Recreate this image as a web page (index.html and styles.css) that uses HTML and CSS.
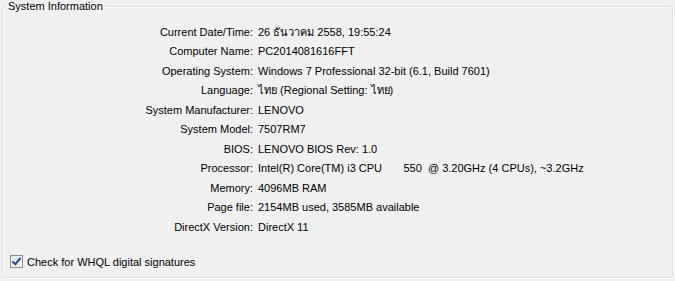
FILE: index.html
```
<!DOCTYPE html>
<html lang="en">
<head>
  <meta charset="UTF-8" />
  <title>System Information</title>
  <link rel="stylesheet" href="styles.css">
</head>
<body>
  <fieldset class="group">
    <legend>System Information</legend>
    <div class="info-grid">
      <div class="label">Current Date/Time:</div><div class="value">26 ธันวาคม 2558, 19:55:24</div>
      <div class="label">Computer Name:</div><div class="value">PC2014081616FFT</div>
      <div class="label">Operating System:</div><div class="value">Windows 7 Professional 32-bit (6.1, Build 7601)</div>
      <div class="label">Language:</div><div class="value">ไทย (Regional Setting: ไทย)</div>
      <div class="label">System Manufacturer:</div><div class="value">LENOVO</div>
      <div class="label">System Model:</div><div class="value">7507RM7</div>
      <div class="label">BIOS:</div><div class="value">LENOVO BIOS Rev: 1.0</div>
      <div class="label">Processor:</div><div class="value">Intel(R) Core(TM) i3 CPU       550  @ 3.20GHz (4 CPUs), ~3.2GHz</div>
      <div class="label">Memory:</div><div class="value">4096MB RAM</div>
      <div class="label">Page file:</div><div class="value">2154MB used, 3585MB available</div>
      <div class="label">DirectX Version:</div><div class="value">DirectX 11</div>
    </div>
    <label class="whql"><span class="check"></span>Check for WHQL digital signatures</label>
  </fieldset>
</body>
</html>
```
FILE: styles.css
```
body {
  margin: 0;
  background: #f0f0f0;
  font-family: 'Liberation Sans', Arial, sans-serif;
  font-size: 11px;
  color: #000;
  height: 281px;
  overflow: hidden;
}
.group {
  box-sizing: border-box;
  margin: 0 2px;
  padding: 10px 0 0 0;
  width: 671px;
  height: 278px;
  border: 1px solid #d5dfe5;
  border-radius: 3px;
  box-shadow: inset 1px 1px 0 #fff, 1px 1px 0 #fff;
  position: relative;
}
.group legend {
  margin-left: 3px;
  padding: 0 2px;
  line-height: 12px;
}
.info-grid {
  display: grid;
  grid-template-columns: 250px auto;
  column-gap: 5px;
  grid-auto-rows: 19.5px;
  align-items: center;
}
.label {
  text-align: right;
}
.value {
  white-space: pre;
}
.whql {
  position: absolute;
  left: 7px;
  bottom: 9px;
  display: flex;
  align-items: center;
  gap: 4px;
}
.check {
  width: 11px;
  height: 11px;
  border: 1px solid #8e8f8f;
  background: linear-gradient(135deg, #e0e3e6, #fdfdfd);
  position: relative;
}
.check::after {
  content: "";
  position: absolute;
  left: 3px;
  top: 0px;
  width: 3px;
  height: 7px;
  border: solid #2a4a8c;
  border-width: 0 2px 2px 0;
  transform: rotate(40deg);
}
```
